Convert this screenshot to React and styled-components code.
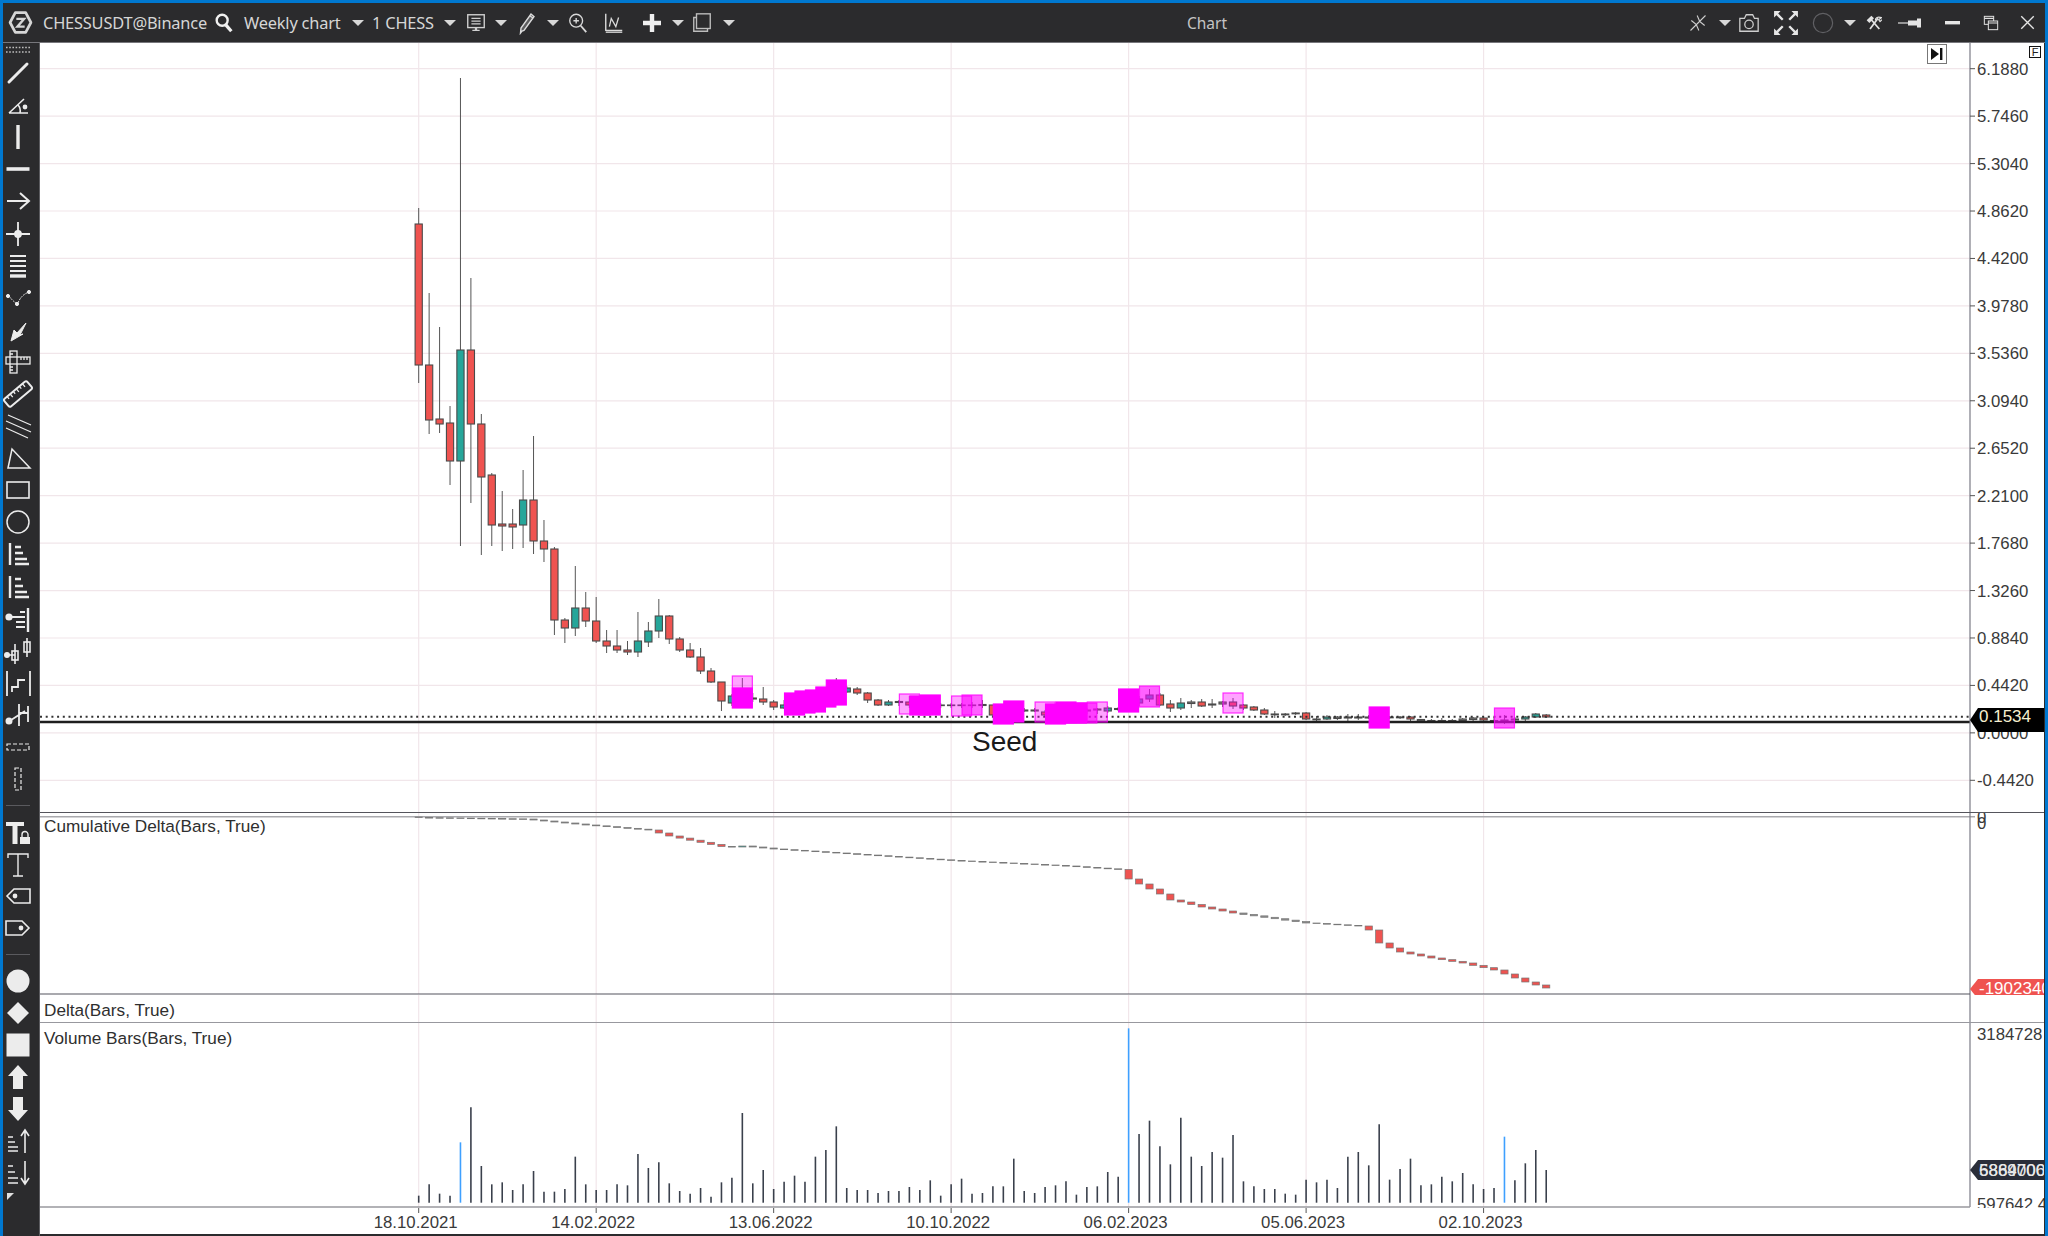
import React from "react";
import styled, { createGlobalStyle } from "styled-components";

const GlobalStyle = createGlobalStyle`
  html, body { margin: 0; padding: 0; height: 1236px; overflow: hidden; background: #fff; }
  #root { width: 2048px; height: 1236px; overflow: hidden; }
`;

const Window = styled.div`
  box-sizing: border-box;
  width: 2048px;
  height: 1236px;
  display: flex;
  flex-direction: column;
  background: #2b2b2d;
  border-top: 3px solid #0078d0;
  border-left: 3px solid #0078d0;
  border-right: 3px solid #0078d0;
  overflow: hidden;
`;

const TitleBar = styled.div`
  flex: 0 0 40px;
  box-sizing: border-box;
  height: 40px;
  display: flex;
  align-items: center;
  padding-right: 5px;
  background: #2b2b2d;
  border-bottom: 1px solid #77777c;
  color: #d6d6d6;
  font: 16.4px "Noto Sans", "Open Sans", sans-serif;
`;

const Slot = styled.div`
  flex: 0 0 ${(p) => p.$w}px;
  width: ${(p) => p.$w}px;
  height: 39px;
  display: flex;
  align-items: center;
  justify-content: ${(p) => (p.$text ? "flex-start" : "center")};
  padding-left: ${(p) => p.$pad || 0}px;
  box-sizing: border-box;
  white-space: nowrap;
  letter-spacing: ${(p) => (p.$text ? "-0.2px" : "0")};
`;

const Caret = styled.span`
  width: 0;
  height: 0;
  border-left: 6px solid transparent;
  border-right: 6px solid transparent;
  border-top: 6px solid #d8d8d8;
`;

const WindowTitle = styled.div`
  flex: 1;
  text-align: center;
  padding-right: 14px;
  color: #c4c4c4;
  font-size: 15.5px;
`;

const Body = styled.div`
  flex: 1;
  display: flex;
  min-height: 0;
`;

const SideBar = styled.div`
  flex: 0 0 37px;
  box-sizing: border-box;
  width: 37px;
  padding-right: 6px;
  display: flex;
  flex-direction: column;
  background: #2b2b2d;
  border-right: 1px solid #5c5c60;
  color: #ececec;
  position: relative;
`;

const Grip = styled.div`
  flex: 0 0 14px;
  display: flex;
  align-items: center;
  justify-content: center;
  svg { display: block; }
`;

const ToolCell = styled.div`
  flex: 0 0 32.1px;
  height: 32.1px;
  display: flex;
  align-items: center;
  justify-content: center;
  svg { display: block; overflow: visible; }
`;

const ToolDivider = styled.div`
  flex: 0 0 ${(p) => p.$h}px;
  display: flex;
  align-items: center;
  justify-content: center;
  &::after {
    content: "";
    width: 24px;
    height: 1px;
    background: #5a5a5e;
  }
`;

const CornerMark = styled.span`
  position: absolute;
  left: 4px;
  bottom: 36px;
  width: 0;
  height: 0;
  border-top: 7px solid #e0e0e0;
  border-left: 7px solid transparent;
  transform: rotate(-90deg);
`;

const ChartArea = styled.div`
  flex: 0 0 2004px;
  width: 2004px;
  display: flex;
  flex-direction: column;
  background: #fff;
  border-right: 1px solid #2b2b2d;
`;

const Pane = styled.div`
  position: relative;
  box-sizing: border-box;
  flex: 0 0 ${(p) => p.$h}px;
  height: ${(p) => p.$h}px;
  overflow: hidden;
  border-bottom: ${(p) => (p.$rule ? `1px solid ${p.$rule}` : "none")};
  svg { display: block; }
`;

const PaneTitle = styled.div`
  position: absolute;
  left: 4px;
  top: ${(p) => p.$top}px;
  color: #2f2f2f;
  font: 17.2px "Liberation Sans", Arial, sans-serif;
  white-space: nowrap;
`;

const ScrollButton = styled.div`
  position: absolute;
  left: 1887px;
  top: 1px;
  width: 20px;
  height: 20px;
  box-sizing: border-box;
  display: flex;
  align-items: center;
  justify-content: center;
  background: #fff;
  border: 1px solid #777;
`;

const FixBox = styled.div`
  position: absolute;
  left: 1989px;
  top: 3px;
  width: 12px;
  height: 12px;
  box-sizing: border-box;
  border: 1px solid #111;
  color: #222;
  font: 11px/10px "Liberation Sans", Arial, sans-serif;
  text-align: center;
`;

const SeedLabel = styled.div`
  position: absolute;
  left: 932px;
  top: 683px;
  color: #1a1a1a;
  font: 28px "Liberation Sans", Arial, sans-serif;
`;

const Footer = styled.div`
  flex: 0 0 2px;
  background: #2b2b2d;
`;

// chart geometry, in page pixels
const X0 = 418.7;
const STEP = 10.44;
const AXIS_X = 1970;
const barX = (i) => X0 + STEP * i;
const GRID_BARS = [0, 17, 34, 51, 68, 85, 102];
const DATES = ["18.10.2021", "14.02.2022", "13.06.2022", "10.10.2022", "06.02.2023", "05.06.2023", "02.10.2023"];
const PRICES = ["6.1880", "5.7460", "5.3040", "4.8620", "4.4200", "3.9780", "3.5360", "3.0940", "2.6520", "2.2100", "1.7680", "1.3260", "0.8840", "0.4420", "0.0000", "-0.4420"];
const priceY = (n) => 68.7 + 47.44 * n;

const RED = "#ef5350";
const TEAL = "#26a69a";
const GREY = "#8a8a8a";

// [high, bodyTop, bodyBottom, low, colour]
const CANDLES = [
  [208, 224, 365, 383, "r"], [293, 365, 420, 434, "r"], [327, 419, 424, 433, "r"], [406, 423, 461, 485, "r"],
  [78, 350, 461, 546, "g"], [278, 350, 424, 503, "r"], [414, 424, 477, 555, "r"], [473, 475, 525, 546, "r"],
  [491, 524, 526, 551, "r"], [509, 524, 527, 549, "r"], [470, 500, 525, 548, "g"], [436, 500, 541, 554, "r"],
  [520, 541, 549, 562, "r"], [547, 549, 620, 635, "r"], [618, 620, 628, 643, "r"], [566, 608, 628, 636, "g"],
  [592, 608, 621, 627, "r"], [597, 621, 641, 643, "r"], [630, 641, 646, 653, "r"], [630, 646, 650, 653, "r"],
  [641, 650, 652, 655, "r"], [612, 641, 652, 657, "g"], [622, 631, 642, 647, "g"], [599, 616, 631, 638, "g"],
  [615, 616, 639, 644, "r"], [637, 639, 650, 652, "r"], [643, 650, 657, 658, "r"], [648, 657, 671, 674, "r"],
  [668, 671, 682, 683, "r"], [682, 682, 701, 711, "r"], [694, 696, 703, 706, "g"], [678, 696, 698, 707, "r"],
  [693, 698, 699, 702, "d"], [687, 699, 702, 705, "r"], [700, 702, 707, 710, "r"], [700, 705, 708, 709, "g"],
  [698, 702, 706, 708, "r"], [696, 700, 704, 706, "r"], [694, 698, 702, 704, "r"], [690, 694, 698, 700, "r"],
  [678, 690, 694, 696, "r"], [686, 688, 692, 693, "g"], [687, 689, 693, 695, "r"], [692, 693, 700, 703, "r"],
  [699, 700, 705, 706, "r"], [700, 702, 705, 706, "g"], [700, 701.5, 702.5, 706, "d"], [696, 702, 705, 708, "r"],
  [700, 702, 706, 708, "r"], [702, 704, 705, 708, "r"], [703, 705, 705.6, 708, "d"], [703, 705, 705.6, 708, "d"],
  [703, 705, 705.6, 708, "d"], [702, 705, 705.6, 708, "d"], [700, 704.5, 705.5, 708, "d"], [705, 705, 715, 716, "r"],
  [704, 706, 712, 714, "r"], [706, 708, 712, 714, "r"], [708, 710, 711, 712, "d"], [708, 710, 711, 712, "d"],
  [710, 712, 715, 717, "r"], [711, 713, 715, 717, "r"], [710, 712, 713, 716, "d"], [709, 711, 712, 715, "d"],
  [708, 710, 711, 714, "d"], [708, 709, 710, 714, "d"], [706, 708, 711, 713, "g"], [707, 708.5, 709.5, 711, "d"],
  [699, 703, 708, 710, "g"], [696, 699, 703, 706, "g"], [689, 695, 699, 702, "g"], [693, 695, 705, 706, "r"],
  [700, 704, 708, 712, "r"], [698, 703, 708, 710, "g"], [700, 702, 703.5, 708, "d"], [699, 702, 706, 707, "r"],
  [699, 704, 705, 708, "d"], [701, 702, 704, 707, "d"], [698, 702, 706, 709, "r"], [704, 705, 708, 710, "r"],
  [706, 707, 710, 711, "r"], [708, 710, 714, 715, "r"], [711, 714, 714.8, 718, "d"], [713, 714, 714.8, 716, "d"],
  [712, 713, 713.8, 715, "d"], [712, 713, 719, 720, "r"], [716, 719, 719.8, 722, "d"], [715, 717, 719, 720, "g"],
  [716, 717, 718.5, 720, "d"], [714, 717, 718, 721, "d"], [714, 717, 718, 720, "d"], [715, 717, 718, 719, "d"],
  [714, 717, 719, 721, "d"], [716, 717, 717.8, 719, "d"], [716, 717, 717.8, 719, "d"], [716, 717, 719, 722, "r"],
  [719, 719.5, 720.8, 722, "d"], [719, 720.5, 721.2, 723, "d"], [718, 720.5, 721.2, 723, "d"], [719, 720.5, 721.2, 723, "d"],
  [718, 719, 720.5, 722, "d"], [717, 718, 719.5, 721, "d"], [716, 718, 720, 721, "r"], [717, 720.5, 721.2, 723, "d"],
  [715, 720, 721, 724, "d"], [717, 719, 720, 722, "d"], [716, 717, 719, 721, "g"], [713, 714, 717, 718, "g"],
  [714, 715, 717, 718, "r"],
];

// [bar, top, bottom, look]
const MARKS = [
  [31, 676, 697, "soft"], [31, 688, 708, "solid"], [36, 693, 715, "solid"], [37, 691, 713, "solid"],
  [38, 690, 712, "solid"], [39, 687, 707, "solid"], [40, 680, 705, "solid"], [47, 694, 714, "soft"],
  [48, 696, 715, "solid"], [49, 695, 715, "solid"], [52, 696, 716, "soft"], [53, 695, 715, "mid"],
  [56, 704, 724, "solid"], [57, 701, 722, "solid"], [60, 702, 722, "soft"], [61, 704, 724, "solid"],
  [62, 702, 723, "solid"], [63, 703, 723, "solid"], [64, 703, 723, "mid"], [65, 702, 722, "soft"],
  [68, 689, 712, "solid"], [70, 686, 707, "mid"], [78, 693, 713, "soft"], [92, 707, 728, "solid"],
  [104, 708, 728, "mid"],
];
const MARK_OPACITY = { soft: 0.36, mid: 0.62, solid: 1 };

// cumulative delta close by bar, interpolated between these points
const DELTA_POINTS = [
  [0, 817.5], [10, 819], [16, 825], [22, 830], [24, 836], [29, 846.5], [30, 847], [31, 846], [34, 849], [40, 853],
  [51, 860.5], [62, 866], [67, 869.5], [68, 879], [69, 884], [70, 889], [71, 894], [72, 900], [73, 902], [75, 907],
  [78, 913], [85, 923], [90, 926], [91, 930], [92, 943], [93, 948], [94, 952], [97, 958], [100, 963], [103, 970],
  [104, 974], [106, 982], [108, 988],
];
const deltaAt = (i) => {
  const n = DELTA_POINTS.findIndex(([b]) => b >= i);
  if (n <= 0) return DELTA_POINTS[0][1];
  const [b0, v0] = DELTA_POINTS[n - 1];
  const [b1, v1] = DELTA_POINTS[n];
  return v0 + ((v1 - v0) * (i - b0)) / (b1 - b0);
};

// top of each volume bar, read off the reference at 3x above a base of 578
const VOLUME_TOPS = [
  557, 523, 551, 557, 397, 292, 468, 523, 517, 540, 523, 483, 545, 545, 537, 440, 523, 540, 540, 523, 526, 432, 474, 457, 520, 543, 551, 534,
  560, 517, 503, 309, 520, 480, 537, 515, 497, 515, 440, 420, 349, 534, 540, 540, 549, 543, 543, 531, 540, 511, 557, 523, 506, 551, 549, 529,
  529, 446, 543, 549, 531, 526, 514, 554, 531, 529, 486, 500, 55, 372, 332, 409, 463, 323, 440, 468, 426, 443, 375, 514, 529, 537, 537, 551,
  554, 509, 517, 509, 534, 440, 426, 466, 343, 509, 477, 446, 526, 523, 500, 514, 489, 523, 537, 534, 380, 511, 460, 420, 480,
];
const BLUE_BARS = [4, 68, 104];

const AxisText = ({ y, children }) => (
  <text x="1977" y={y + 6} fontFamily='"Liberation Sans", Arial, sans-serif' fontSize="16.8" fill="#3a3a3a">
    {children}
  </text>
);

const TagText = ({ x, y, fill, children }) => (
  <text x={x} y={y} fontFamily='"Liberation Sans", Arial, sans-serif' fontSize="17" fill={fill}>
    {children}
  </text>
);

const PriceTag = ({ top, h, color }) => (
  <path d={`M1970 ${top + h / 2} L1978 ${top} H2044 V${top + h} H1978 Z`} fill={color} />
);

const VGrid = ({ top, bottom }) =>
  GRID_BARS.map((b) => (
    <line key={b} x1={barX(b)} x2={barX(b)} y1={top} y2={bottom} stroke="#f1e6ea" strokeWidth="1.2" />
  ));

const AxisLine = ({ top, bottom }) => <line x1={AXIS_X} x2={AXIS_X} y1={top} y2={bottom} stroke="#7b7b85" strokeWidth="1.2" />;

const PaneSvg = ({ top, h, children }) => (
  <svg width="2004" height={h} viewBox={`40 ${top} 2004 ${h}`}>
    {children}
  </svg>
);

const Candle = ({ i, c }) => {
  const [high, t, b, low, kind] = c;
  const x = barX(i);
  const fill = kind === "r" ? RED : kind === "g" ? TEAL : GREY;
  return (
    <g>
      <line x1={x} x2={x} y1={high} y2={low} stroke="#555" strokeWidth="1" />
      <rect x={x - 3.6} y={t} width="7.2" height={b - t} fill={fill} stroke="#4a4a4a" strokeWidth="1.1" />
    </g>
  );
};

const MainChart = () => (
  <PaneSvg top={43} h={769}>
    {PRICES.map((p, n) => (
      <line key={p} x1="40" x2={AXIS_X} y1={priceY(n)} y2={priceY(n)} stroke="#f1e6ea" strokeWidth="1.2" />
    ))}
    <VGrid top={43} bottom={812} />
    {CANDLES.map((c, i) => (
      <Candle key={i} i={i} c={c} />
    ))}
    <line x1="40" x2={AXIS_X} y1="716.7" y2="716.7" stroke="#333" strokeWidth="2" strokeDasharray="2 3.7" />
    <line x1="40" x2={AXIS_X} y1="722" y2="722" stroke="#1e1e1e" strokeWidth="2.4" />
    {MARKS.map(([b, t, bot, look], n) => (
      <rect key={n} x={barX(b) - 10} y={t} width="20" height={bot - t} fill="#ff00ff" fillOpacity={MARK_OPACITY[look]} stroke="#ff00ff" strokeOpacity={look === "solid" ? 1 : 0.8} strokeWidth="1.2" />
    ))}
    <AxisLine top={43} bottom={812} />
    {PRICES.map((p, n) => (
      <g key={p}>
        <line x1={AXIS_X} x2="1975" y1={priceY(n)} y2={priceY(n)} stroke="#555" strokeWidth="1" />
        <AxisText y={priceY(n)}>{p}</AxisText>
      </g>
    ))}
    <PriceTag top={708} h={24} color="#000" />
    <TagText x="1979" y="722" fill="#f6efcf">0.1534</TagText>
  </PaneSvg>
);

const DeltaChart = () => (
  <PaneSvg top={813} h={182}>
    <VGrid top={813} bottom={994} />
    <line x1="40" x2="1975" y1="816.8" y2="816.8" stroke="#a9a9ad" strokeWidth="1.6" />
    {CANDLES.map((_, i) => {
      const x = barX(i);
      const from = i === 0 ? 817 : deltaAt(i - 1);
      const to = deltaAt(i);
      const top = Math.min(from, to);
      const h = Math.max(Math.abs(to - from), 0.6);
      const fill = to < from ? TEAL : h > 1.6 ? RED : GREY;
      return <rect key={i} x={x - 3.6} y={top} width="7.2" height={h} fill={fill} stroke="#777" strokeWidth="0.7" />;
    })}
    <AxisLine top={813} bottom={995} />
    <AxisText y={817}>0</AxisText>
    <AxisText y={823}>0</AxisText>
    <PriceTag top={979} h={20} color={RED} />
    <TagText x="1979" y="994" fill="#fff">-1902340</TagText>
    <line x1="40" x2={AXIS_X} y1="994" y2="994" stroke="#55555f" strokeWidth="1.2" />
  </PaneSvg>
);

const EmptyChart = () => (
  <PaneSvg top={995} h={27}>
    <VGrid top={995} bottom={1022} />
    <AxisLine top={995} bottom={1022} />
  </PaneSvg>
);

const VolumeChart = () => (
  <PaneSvg top={1023} h={185}>
    <VGrid top={1023} bottom={1207} />
    {VOLUME_TOPS.map((top, i) => (
      <line
        key={i}
        x1={barX(i)}
        x2={barX(i)}
        y1={1010 + top / 3}
        y2="1202.7"
        stroke={BLUE_BARS.includes(i) ? "#3ea0ff" : "#3a404c"}
        strokeWidth="1.6"
      />
    ))}
    <AxisLine top={1023} bottom={1207} />
    <line x1="40" x2={AXIS_X} y1="1207" y2="1207" stroke="#98989e" strokeWidth="1.4" />
    <AxisText y={1034}>3184728</AxisText>
    <PriceTag top={1160} h={20} color="#2a2e39" />
    <TagText x="1979" y="1176" fill="#e8e8e8">6864006</TagText>
    <TagText x="1979" y="1176" fill="#e8e8e8">5889700</TagText>
    <AxisText y={1204}>597642.4</AxisText>
  </PaneSvg>
);

const TimeAxis = () => (
  <PaneSvg top={1208} h={26}>
    {GRID_BARS.map((b, n) => (
      <g key={b}>
        <line x1={barX(b)} x2={barX(b)} y1="1208" y2="1213" stroke="#555" strokeWidth="1" />
        <text x={barX(b) - 3} y="1228" textAnchor="middle" fontFamily='"Liberation Sans", Arial, sans-serif' fontSize="16.8" fill="#3a3a3a">
          {DATES[n]}
        </text>
      </g>
    ))}
  </PaneSvg>
);

const Ico = ({ s = 24, children, ...rest }) => (
  <svg width={s} height={s} viewBox="0 0 24 24" fill="none" stroke="currentColor" strokeWidth="1.5" {...rest}>
    {children}
  </svg>
);

const LogoIcon = () => (
  <Ico s={25} strokeWidth="2.6">
    <path d="M7 2.5H17L22 12L17 21.5H7L2 12Z" strokeLinejoin="round" />
    <path d="M8 8.5H15.5L9 16H16" strokeWidth="2.2" />
  </Ico>
);
const SearchIcon = () => (
  <Ico s={22} strokeWidth="2.6" color="#f0f0f0">
    <circle cx="10" cy="9" r="6" />
    <path d="M14 14L20 21" strokeWidth="3.6" />
  </Ico>
);
const MonitorIcon = () => (
  <Ico s={22} color="#d0d0d0">
    <rect x="3" y="3" width="18" height="14" />
    <path d="M7 7H17M7 10H17M7 13H17M8 20H16" />
    <path d="M12 17V20" strokeWidth="2.5" />
  </Ico>
);
const PencilIcon = () => (
  <Ico s={24} color="#dcdcdc" strokeWidth="1.4">
    <path d="M7 20L5.5 22L6 17L16 3L19 5.5L9 19.5Z" fill="#bbb" fillOpacity="0.35" />
    <path d="M15 5L18 7" />
  </Ico>
);
const ZoomIcon = () => (
  <Ico s={22} color="#d8d8d8">
    <circle cx="10" cy="9.5" r="7" />
    <path d="M15 15L21 22" strokeWidth="2" />
    <path d="M10 6.5V12.5M7 9.5H13" />
  </Ico>
);
const LinesIcon = () => (
  <Ico s={22} color="#dcdcdc">
    <path d="M3 2V20H21" />
    <path d="M3 22H21" />
    <path d="M7 16L9 7L14 16L17 6" strokeWidth="1.4" />
  </Ico>
);
const PlusIcon = () => (
  <Ico s={24} color="#f0f0f0" strokeWidth="4.4">
    <path d="M12 3V21M3 12H21" />
  </Ico>
);
const PagesIcon = () => (
  <Ico s={22} color="#bdbdbd">
    <rect x="6" y="2" width="15" height="16" />
    <path d="M6 6H3V21H18V18" />
  </Ico>
);
const CompressIcon = () => (
  <Ico s={20} color="#cfcfcf" strokeWidth="1.3">
    <path d="M3 21L21 3" />
    <path d="M4 9L10 14L13 21" />
    <path d="M20 15L14 10L11 3" />
  </Ico>
);
const CameraIcon = () => (
  <Ico s={22} color="#cfcfcf" strokeWidth="1.4">
    <path d="M2 7H7L9 3H16L18 7H22V21H2Z" />
    <circle cx="12" cy="13.5" r="4.6" />
  </Ico>
);
const ExpandIcon = () => (
  <Ico s={26} color="#e6e6e6" strokeWidth="2.2">
    <path d="M2 2L9 9M22 2L15 9M2 22L9 15M22 22L15 15" />
    <path d="M1 7V1H7L1 7ZM23 7V1H17L23 7ZM1 17V23H7L1 17ZM23 17V23H17L23 17Z" fill="currentColor" stroke="none" />
  </Ico>
);
const RingIcon = () => (
  <Ico s={22} color="#606064" strokeWidth="1.3">
    <circle cx="12" cy="12" r="10.5" />
  </Ico>
);
const ToolsIcon = () => (
  <Ico s={22} color="#e2e2e2" strokeWidth="2.6">
    <path d="M7 6L20 21" />
    <path d="M18 5L6 21" />
    <path d="M1 8L8 1L12 5L5 12Z" fill="currentColor" stroke="none" />
    <path d="M14 8C14 4 18 2 23 4L19 7L21 10L24 7" strokeWidth="1.8" />
  </Ico>
);
const PinIcon = () => (
  <svg width="24" height="14" viewBox="0 0 24 14">
    <path d="M0 7H12" stroke="#dcdcdc" strokeWidth="1.2" />
    <path d="M10 4.5H19V2.5H23V11.5H19V9.5H10Z" fill="#e4e4e4" />
  </svg>
);
const MinIcon = () => (
  <svg width="16" height="6" viewBox="0 0 16 6">
    <rect y="1" width="15" height="3.4" fill="#e6e6e6" />
  </svg>
);
const RestoreIcon = () => (
  <Ico s={16} color="#e0e0e0" strokeWidth="1.5">
    <rect x="2" y="2" width="14" height="12" />
    <rect x="8" y="9" width="14" height="13" fill="#2b2b2d" />
    <path d="M8 12H22M2 5H16" strokeWidth="1.8" />
  </Ico>
);
const CloseIcon = () => (
  <Ico s={15} color="#e6e6e6" strokeWidth="2.2">
    <path d="M2 2L22 22M22 2L2 22" />
  </Ico>
);

const Tool = ({ sw = 2, children }) => (
  <ToolCell>
    <svg width="30" height="30" viewBox="0 0 30 30" fill="none" stroke="currentColor" strokeWidth={sw}>
      {children}
    </svg>
  </ToolCell>
);

const TOOLS_TOP = [
  <Tool key="line" sw={3}><path d="M6 24L24 6" strokeLinecap="round" /></Tool>,
  <Tool key="angle" sw={1.6}><path d="M6 23H25M6 23L21 9" /><path d="M15 15Q18 18 17 23" /><circle cx="22" cy="17" r="1.6" fill="currentColor" /></Tool>,
  <Tool key="vert" sw={3.4}><path d="M15 3V27" /></Tool>,
  <Tool key="horiz" sw={3.6}><path d="M3.5 15H26.5" /></Tool>,
  <Tool key="arrow" sw={2}><path d="M4 15H26M17 7L26 15L17 23" /></Tool>,
  <Tool key="cross" sw={1.8}><path d="M3 15H27M15 3V27" /><circle cx="15" cy="15" r="3" fill="currentColor" /></Tool>,
  <Tool key="fib" sw={2}><path d="M7 5H23M7 10H23M7 15H23M7 20H23" /><path d="M7 25H23" strokeWidth="3.4" /></Tool>,
  <Tool key="curve" sw={1}><path d="M6 13Q12 21 15 20Q18 12 26 9" strokeDasharray="2 1" /><circle cx="5" cy="13" r="1.6" fill="currentColor" /><circle cx="14" cy="21" r="1.6" fill="currentColor" /><circle cx="26" cy="9" r="1.6" fill="currentColor" /></Tool>,
  <Tool key="pen" sw={1}><path d="M8 26L11 15L14 18L23 8L17 20L20 19Z" fill="currentColor" /></Tool>,
  <Tool key="tee" sw={1.3}><rect x="7" y="4" width="7" height="22" /><rect x="3" y="10" width="24" height="7" /><path d="M7 7H10M7 20H10M7 23H10M18 10V13M21 10V13M24 10V13" /></Tool>,
  <Tool key="ruler" sw={2}><g transform="rotate(-40 15 15)"><rect x="0" y="10" width="30" height="10" rx="2" /><path d="M5 10V13M9 10V14M13 10V13M17 10V14M21 10V13M25 10V14" strokeWidth="1.3" /></g></Tool>,
  <Tool key="channel" sw={1.2}><path d="M5 4L28 14M3 10L28 21M3 17L25 27" /></Tool>,
  <Tool key="triangle" sw={1.5}><path d="M5 25L9 6L27 25Z" /></Tool>,
  <Tool key="rect" sw={1.6}><rect x="4" y="7" width="22" height="16" /></Tool>,
  <Tool key="circle" sw={1.5}><circle cx="15" cy="15" r="11" /></Tool>,
  <Tool key="gann1" sw={2.4}><path d="M7 4V26" /><path d="M12 8H18M12 14H20M12 20H24M12 25H26" /></Tool>,
  <Tool key="gann2" sw={2.4}><path d="M7 4V26" /><path d="M12 7H18M12 14H20M12 20H24M12 25H26" /></Tool>,
  <Tool key="levels" sw={2}><path d="M25 4V28" strokeWidth="2.4" /><path d="M17 8H22M8 13H22M13 18H22M13 23H22" /><circle cx="6" cy="13" r="2.6" fill="currentColor" /></Tool>,
  <Tool key="candles" sw={1.6}><path d="M2 19H12M12 8V28M24 2V21" /><rect x="9" y="15" width="6" height="9" /><rect x="21" y="6" width="6" height="10" /><circle cx="4" cy="19" r="2.2" fill="currentColor" /></Tool>,
  <Tool key="step" sw={1.8}><path d="M4 3V28M27 3V28M9 24V19H15V12H22" /></Tool>,
  <Tool key="doji" sw={1.8}><path d="M5 22L22 11M16 4V26M25 6V22M16 13H25" /><circle cx="6" cy="21" r="2.6" fill="currentColor" /></Tool>,
  <Tool key="dashH" sw={1.2}><rect x="4" y="12" width="22" height="6" strokeDasharray="4 2" /></Tool>,
  <Tool key="dashV" sw={1.2}><rect x="12" y="4" width="6" height="22" strokeDasharray="4 2" /></Tool>,
];

const TOOLS_TEXT = [
  <Tool key="tlock" sw={0}><path d="M3 5H21V9H14.5V27H9.5V9H3Z" fill="currentColor" /><rect x="17" y="20" width="10" height="7" fill="currentColor" /><path d="M19 20V17.5A3 3 0 0 1 25 17.5V20" stroke="currentColor" strokeWidth="1.4" /></Tool>,
  <Tool key="text" sw={1.4}><path d="M5 9V5H25V9M15 5V27M10 27H20" /></Tool>,
  <Tool key="tagL" sw={1.6}><path d="M4 15L11 8H27V22H11Z" /><circle cx="12" cy="15" r="1.6" fill="currentColor" /></Tool>,
  <Tool key="tagR" sw={1.6}><path d="M26 15L19 8H3V22H19Z" /><circle cx="18" cy="15" r="1.6" fill="currentColor" /></Tool>,
];

const TOOLS_MARK = [
  <Tool key="dot" sw={0}><circle cx="15" cy="15" r="11.5" fill="currentColor" /></Tool>,
  <Tool key="diamond" sw={0}><path d="M15 4L26 15L15 26L4 15Z" fill="currentColor" /></Tool>,
  <Tool key="square" sw={0}><rect x="3.5" y="3.5" width="23" height="23" fill="currentColor" /></Tool>,
  <Tool key="up" sw={0}><path d="M15 3L25 14H20V27H10V14H5Z" fill="currentColor" /></Tool>,
  <Tool key="down" sw={0}><path d="M15 27L25 16H20V3H10V16H5Z" fill="currentColor" /></Tool>,
  <Tool key="sortUp" sw={1.6}><path d="M5 11H10M5 16H12M5 21H15M5 25H15" /><path d="M22 27V5M18 10L22 4L26 10" /></Tool>,
  <Tool key="sortDown" sw={1.6}><path d="M5 8H10M5 14H12M5 20H15M5 25H15" /><path d="M22 3V25M18 20L22 26L26 20" /></Tool>,
];

export default function App() {
  return (
    <>
      <GlobalStyle />
      <Window>
        <TitleBar>
          <Slot $w={34}><LogoIcon /></Slot>
          <Slot $w={174} $text $pad={6}>CHESSUSDT@Binance</Slot>
          <Slot $w={26}><SearchIcon /></Slot>
          <Slot $w={107} $text $pad={7}>Weekly chart</Slot>
          <Slot $w={28}><Caret /></Slot>
          <Slot $w={64} $text>1 CHESS</Slot>
          <Slot $w={28}><Caret /></Slot>
          <Slot $w={24}><MonitorIcon /></Slot>
          <Slot $w={26}><Caret /></Slot>
          <Slot $w={26}><PencilIcon /></Slot>
          <Slot $w={26}><Caret /></Slot>
          <Slot $w={24}><ZoomIcon /></Slot>
          <Slot $w={48}><LinesIcon /></Slot>
          <Slot $w={28}><PlusIcon /></Slot>
          <Slot $w={24}><Caret /></Slot>
          <Slot $w={24}><PagesIcon /></Slot>
          <Slot $w={30}><Caret /></Slot>
          <WindowTitle>Chart</WindowTitle>
          <Slot $w={28}><CompressIcon /></Slot>
          <Slot $w={26}><Caret /></Slot>
          <Slot $w={22}><CameraIcon /></Slot>
          <Slot $w={52}><ExpandIcon /></Slot>
          <Slot $w={22}><RingIcon /></Slot>
          <Slot $w={32}><Caret /></Slot>
          <Slot $w={16}><ToolsIcon /></Slot>
          <Slot $w={56}><PinIcon /></Slot>
          <Slot $w={30}><MinIcon /></Slot>
          <Slot $w={46}><RestoreIcon /></Slot>
          <Slot $w={26}><CloseIcon /></Slot>
        </TitleBar>
        <Body>
          <SideBar>
            <Grip>
              <svg width="26" height="8" viewBox="0 0 26 8">
                <path d="M1 1.5H25M1 6H25" stroke="#bdbdbd" strokeWidth="1.6" strokeDasharray="1.6 1.6" />
              </svg>
            </Grip>
            {TOOLS_TOP}
            <ToolDivider $h={21} />
            {TOOLS_TEXT}
            <ToolDivider $h={20} />
            {TOOLS_MARK}
            <CornerMark />
          </SideBar>
          <ChartArea>
            <Pane $h={770} $rule="#55555c">
              <MainChart />
              <ScrollButton>
                <svg width="14" height="14" viewBox="0 0 14 14">
                  <path d="M1 1L9 7L1 13Z" fill="#111" />
                  <rect x="10" y="1" width="2.4" height="12" fill="#111" />
                </svg>
              </ScrollButton>
              <FixBox>F</FixBox>
              <SeedLabel>Seed</SeedLabel>
            </Pane>
            <Pane $h={182}>
              <DeltaChart />
              <PaneTitle $top={3}>Cumulative Delta(Bars, True)</PaneTitle>
            </Pane>
            <Pane $h={28} $rule="#98989e">
              <EmptyChart />
              <PaneTitle $top={5}>Delta(Bars, True)</PaneTitle>
            </Pane>
            <Pane $h={185}>
              <VolumeChart />
              <PaneTitle $top={5}>Volume Bars(Bars, True)</PaneTitle>
            </Pane>
            <Pane $h={26}>
              <TimeAxis />
            </Pane>
            <Footer />
          </ChartArea>
        </Body>
      </Window>
    </>
  );
}
